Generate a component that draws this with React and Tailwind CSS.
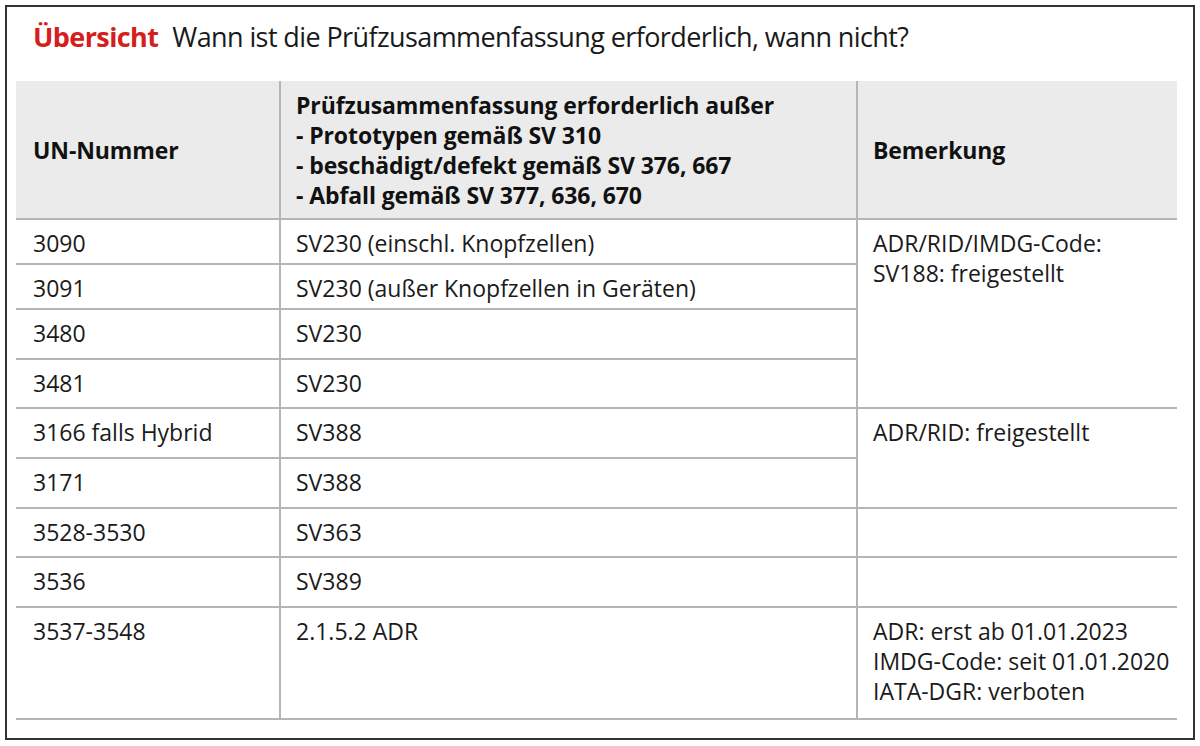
import React from "react";

const F = { fontFamily: '"Open Sans", "Noto Sans", sans-serif' };

const rows = [
  { un: "3090", sv: "SV230 (einschl. Knopfzellen)", h: "h-[45px]" },
  { un: "3091", sv: "SV230 (außer Knopfzellen in Geräten)", h: "h-[45px]" },
  { un: "3480", sv: "SV230", h: "h-[50px]" },
  { un: "3481", sv: "SV230", h: "h-[49px]" },
  { un: "3166 falls Hybrid", sv: "SV388", h: "h-[50px]" },
  { un: "3171", sv: "SV388", h: "h-[50px]" },
  { un: "3528-3530", sv: "SV363", h: "h-[49px]" },
  { un: "3536", sv: "SV389", h: "h-[50px]" },
  { un: "3537-3548", sv: "2.1.5.2 ADR", h: "h-[112px]" },
];

const cell = "border-b-2 border-[#b5b5b5] text-[23px] leading-[30px] pt-[8px] text-[#1a1a1a]";
const head = "h-[139px] bg-[#ebebeb] border-b-2 border-[#b5b5b5] font-bold text-[23px] leading-[30px] text-[#111] tracking-[-0.1px]";

export default function App() {
  return (
    <div className="w-[1200px] h-[746px] bg-white p-[5px]" style={F}>
      <div className="h-[735px] border-2 border-[#333333] pl-[9px]">
        <div className="h-[74px] pt-[13px] pl-[17px] text-[27px] leading-[34px] text-[#1a1a1a] tracking-[-0.6px] whitespace-nowrap">
          <span className="font-bold text-[#d4201c]">Übersicht</span>
          <span className="ml-[14px]">Wann ist die Prüfzusammenfassung erforderlich, wann nicht?</span>
        </div>
        <div className="grid grid-cols-[265px_577px_319px]">
          <div className={`${head} border-r-2 flex items-center pl-[17px]`}>UN-Nummer</div>
          <div className={`${head} border-r-2 flex flex-col justify-center pl-[15px]`}>
            <div>Prüfzusammenfassung erforderlich außer</div>
            <div>- Prototypen gemäß SV 310</div>
            <div>- beschädigt/defekt gemäß SV 376, 667</div>
            <div>- Abfall gemäß SV 377, 636, 670</div>
          </div>
          <div className={`${head} flex items-center pl-[15px]`}>Bemerkung</div>

          {rows.map((r, i) => (
            <React.Fragment key={i}>
              <div className={`${cell} ${r.h} border-r-2 pl-[17px]`} style={{ gridRow: i + 2, gridColumn: 1 }}>{r.un}</div>
              <div className={`${cell} ${r.h} border-r-2 pl-[15px]`} style={{ gridRow: i + 2, gridColumn: 2 }}>{r.sv}</div>
            </React.Fragment>
          ))}
          <div className={`${cell} pl-[15px] row-start-2 row-span-4 col-start-3`}>
            <div>ADR/RID/IMDG-Code:</div>
            <div>SV188: freigestellt</div>
          </div>
          <div className={`${cell} pl-[15px] row-start-6 row-span-2 col-start-3`}>ADR/RID: freigestellt</div>
          <div className={`${cell} pl-[15px] row-start-8 col-start-3`}></div>
          <div className={`${cell} pl-[15px] row-start-9 col-start-3`}></div>
          <div className={`${cell} pl-[15px] row-start-10 col-start-3`}>
            <div>ADR: erst ab 01.01.2023</div>
            <div>IMDG-Code: seit 01.01.2020</div>
            <div>IATA-DGR: verboten</div>
          </div>
        </div>
      </div>
    </div>
  );
}
